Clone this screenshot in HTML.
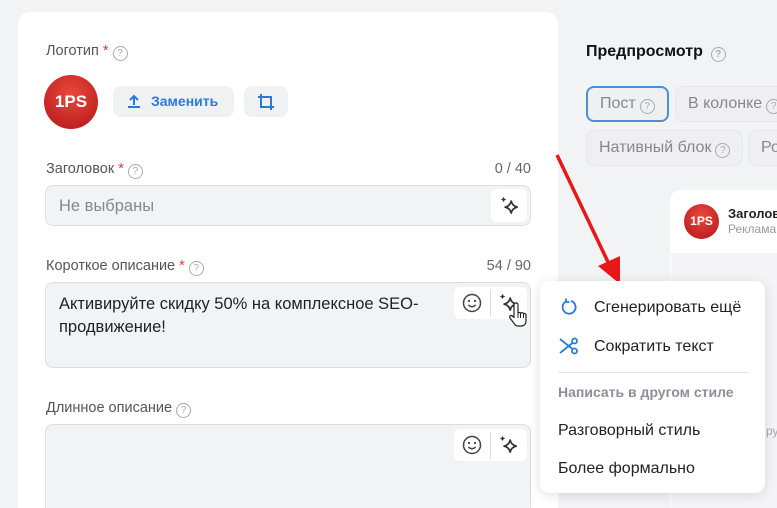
<!DOCTYPE html><html><head><meta charset="utf-8"><style>
*{box-sizing:border-box;margin:0;padding:0}
html,body{width:777px;height:508px;overflow:hidden}
body{background:#f2f3f5;font-family:"Liberation Sans",sans-serif;position:relative;color:#222}
.a{position:absolute}
.card{left:18px;top:12px;width:540px;height:510px;background:#fff;border-radius:12px}
.lbl{font-size:14.5px;color:#555}
.lbl .s{color:#e53935}
.q{display:inline-block;width:15px;height:15px;border:1.3px solid #aaa;border-radius:50%;font-size:10px;line-height:13px;text-align:center;color:#aaa;vertical-align:-1px;margin-left:4px}
.cnt{font-size:14.5px;color:#666}
.inp{background:#f2f3f5;border:1px solid #dcdde0;border-radius:8px}
.btn{background:#fff;border-radius:6px;display:flex;align-items:center;justify-content:center}
.tab{height:36px;border-radius:8px;background:#efeff1;border:1px solid #e6e6e8;font-size:16px;color:#888;padding:0 12px;line-height:34px;white-space:nowrap}
.mi{font-size:16px;color:#222}
</style></head><body>
<svg width="0" height="0" style="position:absolute"><defs>
<symbol id="sp" viewBox="0 0 22 22"><g fill="none" stroke="#333" stroke-width="1.6" stroke-linejoin="round"><path d="M13 6.5q1 4.5 5.5 5.5q-4.5 1-5.5 5.5q-1-4.5-5.5-5.5q4.5-1 5.5-5.5z"/></g><path d="M6 2.5l.8 1.7 1.7.8-1.7.8L6 7.5l-.8-1.7L3.5 5l1.7-.8z" fill="#333"/></symbol>
<symbol id="sm" viewBox="0 0 22 22"><g fill="none" stroke="#444" stroke-width="1.5"><circle cx="11" cy="11" r="8.5"/><path d="M7.3 13q3.7 3.5 7.4 0"/></g><circle cx="8" cy="9" r="1.1" fill="#444"/><circle cx="14" cy="9" r="1.1" fill="#444"/></symbol>
</defs></svg>
<div class="a card"></div>
<div class="a lbl" style="left:46px;top:43px">Логотип <span class="s">*</span><span class="q">?</span></div>
<div class="a" style="left:44px;top:75px;width:54px;height:54px;border-radius:50%;background:radial-gradient(circle at 50% 35%,#e8493c,#b3141a);color:#fff;font-weight:bold;font-size:17px;line-height:54px;text-align:center">1PS</div>
<div class="a" style="left:113px;top:86px;width:121px;height:31px;background:#f0f1f3;border-radius:8px;color:#2a7ad9;font-size:14px;font-weight:bold;line-height:31px;padding-left:38px">Заменить</div>
<svg class="a" style="left:126px;top:93px" width="16" height="16" viewBox="0 0 16 16" fill="none" stroke="#2a7ad9" stroke-width="2"><path d="M8 12V3M4 7l4-4 4 4M2 14h12"/></svg>
<div class="a" style="left:244px;top:86px;width:44px;height:31px;background:#f0f1f3;border-radius:8px"></div>
<svg class="a" style="left:257px;top:93px" width="18" height="18" viewBox="0 0 18 18" fill="none" stroke="#2a7ad9" stroke-width="2"><path d="M4 1v13h13M1 4h13v13"/></svg>

<div class="a lbl" style="left:46px;top:161px">Заголовок <span class="s">*</span><span class="q">?</span></div>
<div class="a cnt" style="right:246px;top:161px">0 / 40</div>
<div class="a inp" style="left:45px;top:185px;width:486px;height:41px"></div>
<div class="a" style="left:59px;top:197px;font-size:16.5px;color:#888">Не выбраны</div>
<div class="a btn" style="left:491px;top:189px;width:36px;height:33px"><svg width="24" height="24"><use href="#sp"/></svg></div>

<div class="a lbl" style="left:46px;top:258px">Короткое описание <span class="s">*</span><span class="q">?</span></div>
<div class="a cnt" style="right:246px;top:258px">54 / 90</div>
<div class="a inp" style="left:45px;top:282px;width:486px;height:86px"></div>
<div class="a" style="left:59px;top:293px;font-size:16.5px;line-height:23px;color:#222;width:390px">Активируйте скидку 50% на комплексное SEO-продвижение!</div>
<div class="a btn" style="left:454px;top:287px;width:73px;height:32px;justify-content:space-around"><svg width="22" height="22"><use href="#sm"/></svg><svg width="24" height="24"><use href="#sp"/></svg></div>
<div class="a" style="left:490px;top:290px;width:1px;height:27px;background:#ddd"></div>
<svg class="a" style="left:508px;top:302px" width="22" height="26" viewBox="0 0 22 26"><path d="M6 3q0-2 2-2t2 2v8q1-1 2.5 0 1.5-1 3 .5 1.5-.5 2.5 1V19q0 4-4 5H10q-2 0-3.5-2L2 16q-1-2 1-2.5 1.5 0 3 2z" fill="#fff" stroke="#222" stroke-width="1.2" stroke-linejoin="round"/><path d="M10 11v5M12.5 11.5v4.5M15.5 12v4" stroke="#222" stroke-width="1"/></svg>

<div class="a lbl" style="left:46px;top:400px">Длинное описание<span class="q">?</span></div>
<div class="a inp" style="left:45px;top:424px;width:486px;height:100px"></div>
<div class="a btn" style="left:454px;top:429px;width:73px;height:32px;justify-content:space-around"><svg width="22" height="22"><use href="#sm"/></svg><svg width="24" height="24"><use href="#sp"/></svg></div>
<div class="a" style="left:490px;top:432px;width:1px;height:27px;background:#ddd"></div>

<div class="a" style="left:586px;top:43px;font-size:16px;font-weight:bold;color:#111">Предпросмотр<span class="q" style="margin-left:8px">?</span></div>
<div class="a tab" style="left:586px;top:86px;border:2px solid #4a90d9;background:#eff0f2;line-height:32px">Пост<span class="q">?</span></div>
<div class="a tab" style="left:675px;top:86px">В колонке<span class="q">?</span></div>
<div class="a tab" style="left:586px;top:130px">Нативный блок<span class="q">?</span></div>
<div class="a tab" style="left:748px;top:130px">Ро</div>
<div class="a" style="left:670px;top:190px;width:120px;height:330px;background:#fff;border-radius:10px 0 0 0"></div>
<div class="a" style="left:671px;top:253px;width:120px;height:270px;background:#f4f4f6"></div>
<div class="a" style="left:684px;top:204px;width:35px;height:35px;border-radius:50%;background:radial-gradient(circle at 50% 35%,#e8493c,#b3141a);color:#fff;font-weight:bold;font-size:12px;line-height:35px;text-align:center">1PS</div>
<div class="a" style="left:728px;top:206px;font-size:13px;font-weight:bold">Заголов</div>
<div class="a" style="left:728px;top:222px;font-size:12px;color:#999">Реклама</div>
<div class="a" style="left:766px;top:424px;font-size:12px;color:#aaa">ру</div>

<svg class="a" style="left:0;top:0" width="777" height="508"><line x1="557" y1="155" x2="608" y2="262" stroke="#e81818" stroke-width="3.5"/><path d="M598 266l22 18l0-28z" fill="#e81818"/></svg>

<div class="a" style="left:540px;top:281px;width:225px;height:212px;background:#fff;border-radius:10px;box-shadow:0 2px 12px rgba(0,0,0,.12)"></div>
<svg class="a" style="left:560px;top:298px" width="18" height="18" viewBox="0 0 18 18" fill="none" stroke="#2a7ad9" stroke-width="1.8"><path d="M6 3.5A6.5 6.5 0 1 0 11 3"/><path d="M6 0.5v3.5h3.5"/></svg>
<div class="a mi" style="left:594px;top:299px">Сгенерировать ещё</div>
<svg class="a" style="left:559px;top:337px" width="20" height="18" viewBox="0 0 20 18" fill="none" stroke="#2a7ad9" stroke-width="1.8"><circle cx="15.5" cy="4" r="2.5"/><circle cx="15.5" cy="14" r="2.5"/><path d="M1 2l12.5 10M1 16l12.5-10"/></svg>
<div class="a mi" style="left:594px;top:338px">Сократить текст</div>
<div class="a" style="left:558px;top:372px;width:190px;height:1px;background:#e6e6e6"></div>
<div class="a" style="left:558px;top:384px;font-size:14px;font-weight:bold;color:#8a8f99">Написать в другом стиле</div>
<div class="a mi" style="left:558px;top:422px">Разговорный стиль</div>
<div class="a mi" style="left:558px;top:460px">Более формально</div>
</body></html>
